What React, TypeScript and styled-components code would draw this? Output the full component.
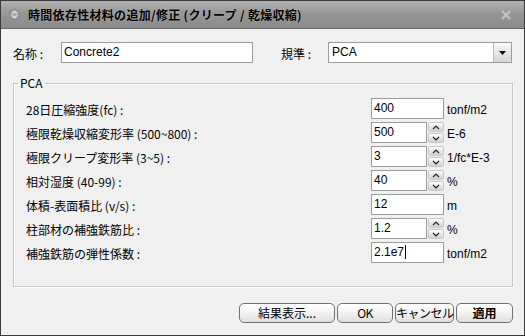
import React from 'react';
import styled, { createGlobalStyle } from 'styled-components';

const GlobalStyle = createGlobalStyle`
  html, body {
    margin: 0;
    padding: 0;
    background: #f0f0f0;
  }
  * {
    box-sizing: border-box;
  }
`;

const UI_FONT = `"Noto Sans CJK JP", "Liberation Sans", sans-serif`;
const INPUT_FONT = `"Liberation Sans", "Noto Sans CJK JP", sans-serif`;

type Row = {
  label: string;
  value: string;
  unit: string;
  spin?: boolean;
  caret?: boolean;
};

const rows: Row[] = [
  { label: '28日圧縮強度(fc) :', value: '400', unit: 'tonf/m2' },
  { label: '極限乾燥収縮変形率 (500~800) :', value: '500', unit: 'E-6', spin: true },
  { label: '極限クリープ変形率 (3~5) :', value: '3', unit: '1/fc*E-3', spin: true },
  { label: '相対湿度 (40-99) :', value: '40', unit: '%', spin: true },
  { label: '体積-表面積比 (v/s) :', value: '12', unit: 'm' },
  { label: '柱部材の補強鉄筋比 :', value: '1.2', unit: '%', spin: true },
  { label: '補強鉄筋の弾性係数 :', value: '2.1e7', unit: 'tonf/m2', caret: true },
];

const App = () => {
  return (
    <>
      <GlobalStyle />
      <Window>
        <TitleBar>
          <AppIcon />
          <Title>時間依存性材料の追加/修正 (クリープ / 乾燥収縮)</Title>
          <CloseButton aria-label="close">
            <svg width="10" height="10" viewBox="0 0 10 10">
              <path d="M1 1 L9 9 M9 1 L1 9" stroke="#c4c4c4" strokeWidth="2" />
            </svg>
          </CloseButton>
        </TitleBar>

        <Body>
          <TopRow>
            <FieldLabel $width={48}>名称 :</FieldLabel>
            <TextBox $width={192}>Concrete2</TextBox>
            <FieldLabel $width={47} $gap={28}>
              規準 :
            </FieldLabel>
            <Select>
              <SelectValue>PCA</SelectValue>
              <DropButton>
                <svg width="7" height="4" viewBox="0 0 7 4">
                  <path d="M0 0 H7 L3.5 4 Z" fill="#111" />
                </svg>
              </DropButton>
            </Select>
          </TopRow>

          <GroupBox>
            <Legend>PCA</Legend>
            <ParamGrid>
              {rows.map((r) => (
                <React.Fragment key={r.label}>
                  <ParamLabel>{r.label}</ParamLabel>
                  <FieldCell>
                    <TextBox $width={r.spin ? 56 : 73}>
                      {r.value}
                      {r.caret && <Caret />}
                    </TextBox>
                    {r.spin && <Spinner />}
                  </FieldCell>
                  <Unit>{r.unit}</Unit>
                </React.Fragment>
              ))}
            </ParamGrid>
          </GroupBox>

          <ButtonBar>
            <PushButton $width={96}>結果表示...</PushButton>
            <PushButton $width={56}>OK</PushButton>
            <PushButton $width={59}>キャンセル</PushButton>
            <PushButton $width={57} $bold>
              適用
            </PushButton>
          </ButtonBar>
        </Body>
      </Window>
    </>
  );
};

const AppIcon = () => (
  <svg width="11" height="11" viewBox="0 0 11 11">
    <circle cx="5.5" cy="5.5" r="5" fill="#a6a6a6" stroke="#7e7e7e" strokeWidth="0.8" />
    <path d="M3 4.6 L5.5 2.4 L8 4.6 M3 6.4 L5.5 8.6 L8 6.4" stroke="#e8e8e8" strokeWidth="1.2" fill="none" />
  </svg>
);

const Spinner = () => (
  <SpinBox>
    <SpinHalf>
      <svg width="8" height="5" viewBox="0 0 8 5">
        <path d="M1 4 L4 1 L7 4" stroke="#222" strokeWidth="1.2" fill="none" />
      </svg>
    </SpinHalf>
    <SpinHalf>
      <svg width="8" height="5" viewBox="0 0 8 5">
        <path d="M1 1 L4 4 L7 1" stroke="#222" strokeWidth="1.2" fill="none" />
      </svg>
    </SpinHalf>
  </SpinBox>
);

const Window = styled.div`
  width: 525px;
  height: 336px;
  border: 1px solid #3a3a3a;
  background: #f0f0f0;
  display: flex;
  flex-direction: column;
  font-family: ${UI_FONT};
  font-size: 12px;
  color: #000;
`;

const TitleBar = styled.div`
  height: 28px;
  display: flex;
  align-items: center;
  gap: 8px;
  padding: 0 10px 0 8px;
  background: linear-gradient(#b2b2b2, #979797 45%, #8a8a8a);
  border-bottom: 1px solid #6c6c6c;
`;

const Title = styled.div`
  font-size: 12px;
  font-weight: 700;
  letter-spacing: 0.3px;
  color: #000;
  text-shadow: 0 0 2px rgba(255, 255, 255, 0.35);
`;

const CloseButton = styled.div`
  margin-left: auto;
  width: 16px;
  height: 16px;
  display: flex;
  align-items: center;
  justify-content: center;
`;

const Body = styled.div`
  flex: 1;
  display: flex;
  flex-direction: column;
  padding: 0 11px 0 12px;
`;

const TopRow = styled.div`
  display: flex;
  align-items: center;
  height: 21px;
  margin-top: 13px;
`;

const FieldLabel = styled.div<{ $width: number; $gap?: number }>`
  width: ${(p) => p.$width}px;
  margin-left: ${(p) => p.$gap ?? 0}px;
  padding-top: 2px;
  white-space: nowrap;
`;

const TextBox = styled.div<{ $width: number }>`
  width: ${(p) => p.$width}px;
  height: 21px;
  border: 1px solid #9c9c9c;
  background: #fff;
  padding: 2px 2px 0;
  font-family: ${INPUT_FONT};
  font-size: 12px;
  line-height: 15px;
  display: flex;
  align-items: flex-start;
`;

const Caret = styled.span`
  display: inline-block;
  width: 1px;
  height: 14px;
  background: #000;
  margin-left: 1px;
`;

const Select = styled.div`
  width: 184px;
  height: 21px;
  border: 1px solid #9c9c9c;
  background: #fff;
  display: flex;
`;

const SelectValue = styled.div`
  flex: 1;
  padding: 2px 3px 0;
  font-family: ${INPUT_FONT};
  font-size: 12px;
  line-height: 15px;
`;

const DropButton = styled.div`
  width: 18px;
  border-left: 1px solid #b8b8b8;
  background: linear-gradient(#fbfbfb, #e4e4e4 55%, #d6d6d6);
  border-radius: 0 2px 2px 0;
  display: flex;
  align-items: center;
  justify-content: center;
`;

const GroupBox = styled.fieldset`
  margin: 13px 0 0;
  width: 500px;
  border: 1px solid #c6c6c6;
  box-shadow: inset 1px 1px 0 #fff, 1px 1px 0 #fff;
  padding: 8px 5px 23px 12px;
`;

const Legend = styled.legend`
  font-size: 12px;
  line-height: 14px;
  padding: 0 2px;
  margin-left: -8px;
  color: #000;
`;

const ParamGrid = styled.div`
  display: grid;
  grid-template-columns: 1fr 73px 60px;
  grid-auto-rows: 21px;
  column-gap: 3px;
  row-gap: 3px;
`;

const ParamLabel = styled.div`
  padding-top: 3px;
  white-space: nowrap;
`;

const FieldCell = styled.div`
  display: flex;
`;

const Unit = styled.div`
  padding-top: 5px;
  font-family: ${INPUT_FONT};
  font-size: 12px;
  line-height: 14px;
  white-space: nowrap;
`;

const SpinBox = styled.div`
  width: 17px;
  display: flex;
  flex-direction: column;
  justify-content: center;
  gap: 1px;
  padding-left: 1px;
`;

const SpinHalf = styled.div`
  height: 10px;
  border: 1px solid #c8c8c8;
  border-radius: 2px;
  background: linear-gradient(#fdfdfd, #e2e2e2 60%, #d2d2d2);
  display: flex;
  align-items: center;
  justify-content: center;
`;

const ButtonBar = styled.div`
  display: flex;
  justify-content: flex-end;
  gap: 2px;
  margin-top: 16px;
  padding-right: 0;
`;

const PushButton = styled.button<{ $width: number; $bold?: boolean }>`
  width: ${(p) => p.$width}px;
  height: 20px;
  padding: 0;
  border: 1px solid #707070;
  border-radius: 5px;
  background: linear-gradient(#ffffff, #f2f2f2 50%, #dedede);
  font-family: ${UI_FONT};
  font-size: 12px;
  font-weight: ${(p) => (p.$bold ? 700 : 400)};
  line-height: 16px;
  color: #000;
  white-space: nowrap;
  letter-spacing: ${(p) => (p.$width < 60 && !p.$bold ? '-0.5px' : '0')};
`;

export default App;
